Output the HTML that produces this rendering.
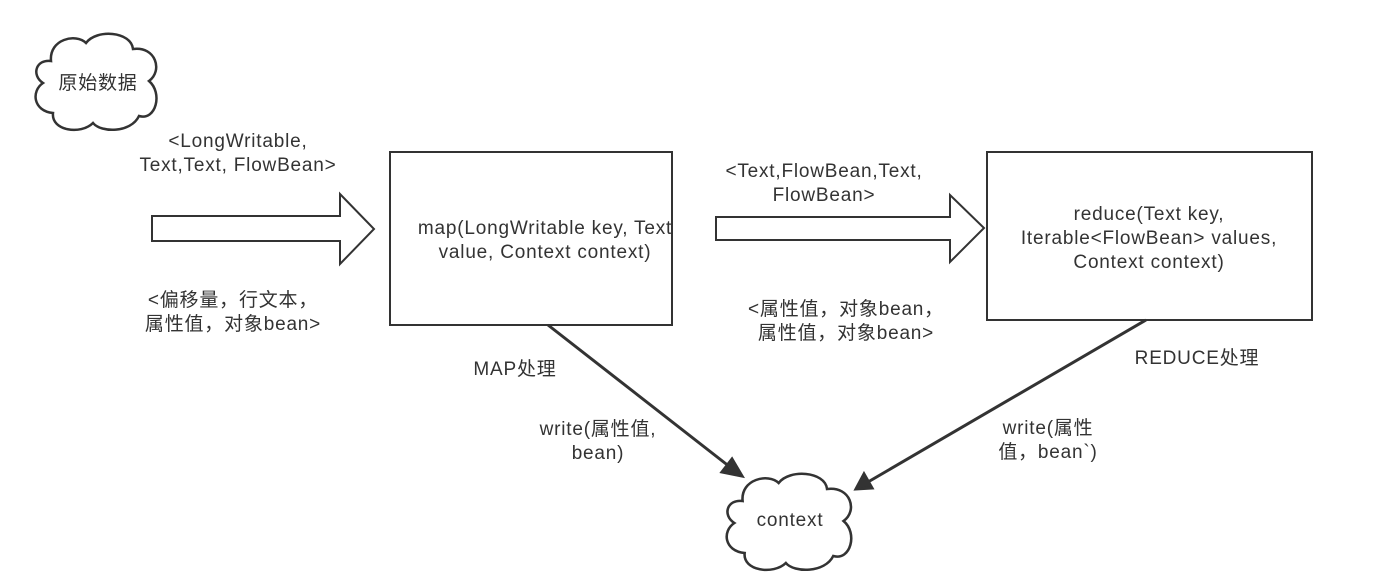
<!DOCTYPE html>
<html><head><meta charset="utf-8"><style>
html,body{margin:0;padding:0;background:#fff;}
svg{display:block;}
text{font-family:"Liberation Sans","Noto Sans CJK SC",sans-serif;font-size:19px;letter-spacing:0.8px;fill:#333;}
</style></head><body>
<svg width="1388" height="583" viewBox="0 0 1388 583" xmlns="http://www.w3.org/2000/svg">
<defs>
<path id="cloud" d="M20,30 C18,8 45,2 55,12 C65,-2 100,0 102,18 C125,15 132,40 118,50 C132,62 125,90 108,85 C100,102 70,102 62,92 C50,104 20,100 22,82 C2,80 0,60 12,52 C0,44 5,28 20,30 Z"/>
</defs>
<g fill="#fff" stroke="#333" stroke-width="2.5">
<use href="#cloud" transform="translate(31,31)"/>
<use href="#cloud" transform="translate(722,471) scale(1.03,1)"/>
</g>
<g fill="#fff" stroke="#333" stroke-width="2">
<path d="M152,216 H340 V194 L374,229 L340,264 V241 H152 Z"/>
<path d="M716,217 H950 V195 L984,228 L950,262 V240 H716 Z"/>
<rect x="390" y="152" width="282" height="173"/>
<rect x="987" y="152" width="325" height="168"/>
</g>
<g stroke="#333" stroke-width="3" fill="#333">
<line x1="548" y1="325" x2="730" y2="467"/>
<path d="M742,476 L722,472 L732,459 Z"/>
<line x1="1146" y1="320" x2="868" y2="482"/>
<path d="M856,489 L864,474 L872,488 Z"/>
</g>
<text x="98" y="89" text-anchor="middle">原始数据</text>
<text x="238" y="147" text-anchor="middle">&lt;LongWritable,</text>
<text x="238" y="171" text-anchor="middle">Text,Text, FlowBean&gt;</text>
<text x="233" y="306" text-anchor="middle">&lt;偏移量，行文本，</text>
<text x="233" y="330" text-anchor="middle">属性值，对象bean&gt;</text>
<text x="545" y="234" text-anchor="middle">map(LongWritable key, Text</text>
<text x="545" y="258" text-anchor="middle">value, Context context)</text>
<text x="824" y="177" text-anchor="middle">&lt;Text,FlowBean,Text,</text>
<text x="824" y="201" text-anchor="middle">FlowBean&gt;</text>
<text x="1149" y="220" text-anchor="middle">reduce(Text key,</text>
<text x="1149" y="244" text-anchor="middle">Iterable&lt;FlowBean&gt; values,</text>
<text x="1149" y="268" text-anchor="middle">Context context)</text>
<text x="846" y="315" text-anchor="middle">&lt;属性值，对象bean，</text>
<text x="846" y="339" text-anchor="middle">属性值，对象bean&gt;</text>
<text x="515" y="375" text-anchor="middle">MAP处理</text>
<text x="598" y="435" text-anchor="middle">write(属性值,</text>
<text x="598" y="459" text-anchor="middle">bean)</text>
<text x="1197" y="364" text-anchor="middle">REDUCE处理</text>
<text x="1048" y="434" text-anchor="middle">write(属性</text>
<text x="1048" y="458" text-anchor="middle">值，bean`)</text>
<text x="790" y="526" text-anchor="middle">context</text>
</svg>
</body></html>
